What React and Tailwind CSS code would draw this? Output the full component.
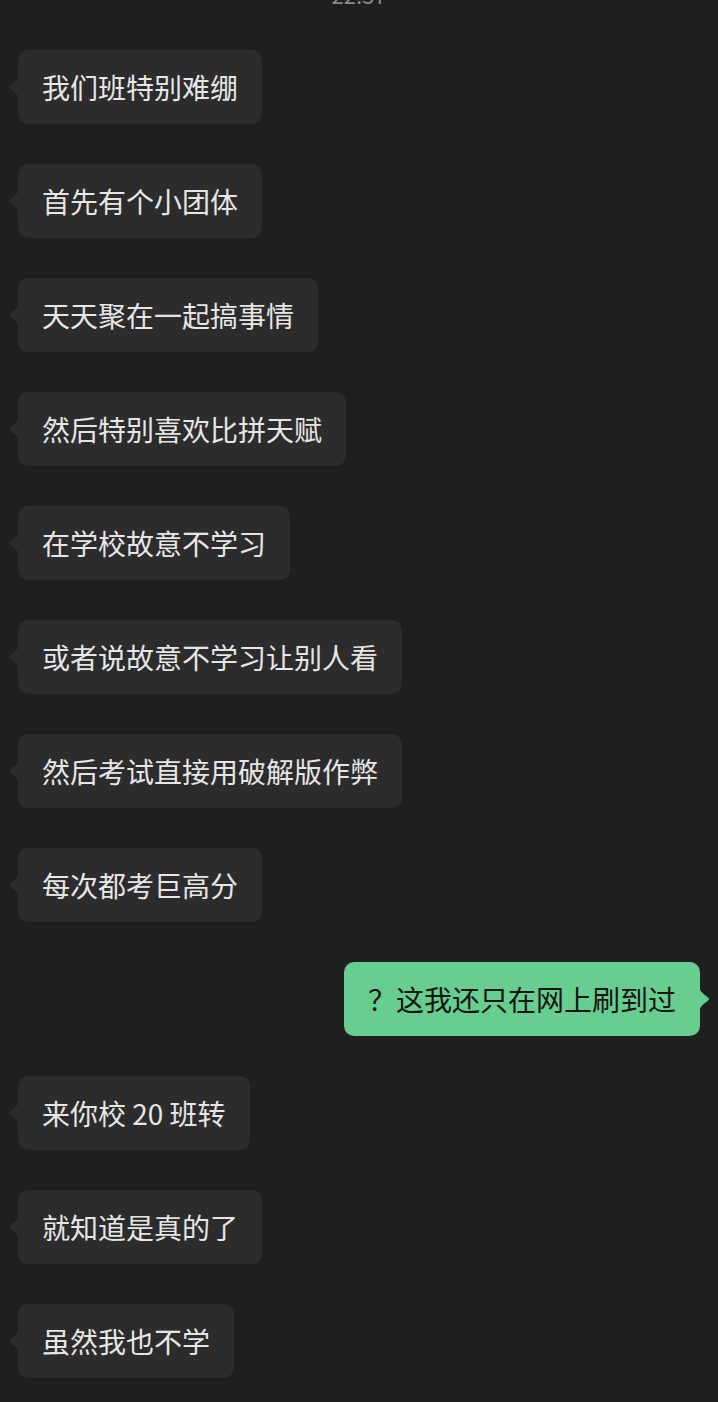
const MESSAGES = [
  { text: '我们班特别难绷' },
  { text: '首先有个小团体' },
  { text: '天天聚在一起搞事情' },
  { text: '然后特别喜欢比拼天赋' },
  { text: '在学校故意不学习' },
  { text: '或者说故意不学习让别人看' },
  { text: '然后考试直接用破解版作弊' },
  { text: '每次都考巨高分' },
  { text: '？这我还只在网上刷到过', mine: true },
  { text: '来你校 20 班转' },
  { text: '就知道是真的了' },
  { text: '虽然我也不学' },
]

function Tail({ mine }) {
  const color = mine ? '#67ce8f' : '#2c2c2c'
  return (
    <svg
      width="11"
      height="26"
      viewBox="0 0 11 26"
      className={mine ? 'shrink-0 -ml-px' : 'shrink-0 -mr-px'}
    >
      <path
        d={
          mine
            ? 'M0 0 C0 6 8 10 9.6 12 Q10.4 13 9.6 14 C8 16 0 20 0 26 Z'
            : 'M11 0 C11 6 3 10 1.4 12 Q0.6 13 1.4 14 C3 16 11 20 11 26 Z'
        }
        fill={color}
      />
    </svg>
  )
}

function Bubble({ text, mine }) {
  return (
    <div className={`flex items-center ${mine ? 'justify-end pr-[8px]' : 'pl-[8px]'}`}>
      {!mine && <Tail />}
      <div
        className={`rounded-[10px] px-6 py-[17px] text-[28px] leading-[40px] whitespace-nowrap ${
          mine ? 'bg-[#67ce8f] text-[#141414]' : 'bg-[#2c2c2c] text-[#e6e6e6]'
        }`}
      >
        {text}
      </div>
      {mine && <Tail mine />}
    </div>
  )
}

export default function App() {
  return (
    <div
      className="h-[1402px] w-[718px] overflow-hidden bg-[#1f1f1f]"
      style={{ fontFamily: '"PingFang SC", "Noto Sans CJK SC", "Noto Sans", sans-serif' }}
    >
      <div className="pt-px">
        <div className="-mt-[19px] h-[25px] text-center text-[22px] leading-[25px] text-[#8a8a8a]">
          22:37
        </div>
      </div>
      <div className="mt-[43px] flex flex-col gap-10">
        {MESSAGES.map((m, i) => (
          <Bubble key={i} text={m.text} mine={m.mine} />
        ))}
      </div>
    </div>
  )
}
